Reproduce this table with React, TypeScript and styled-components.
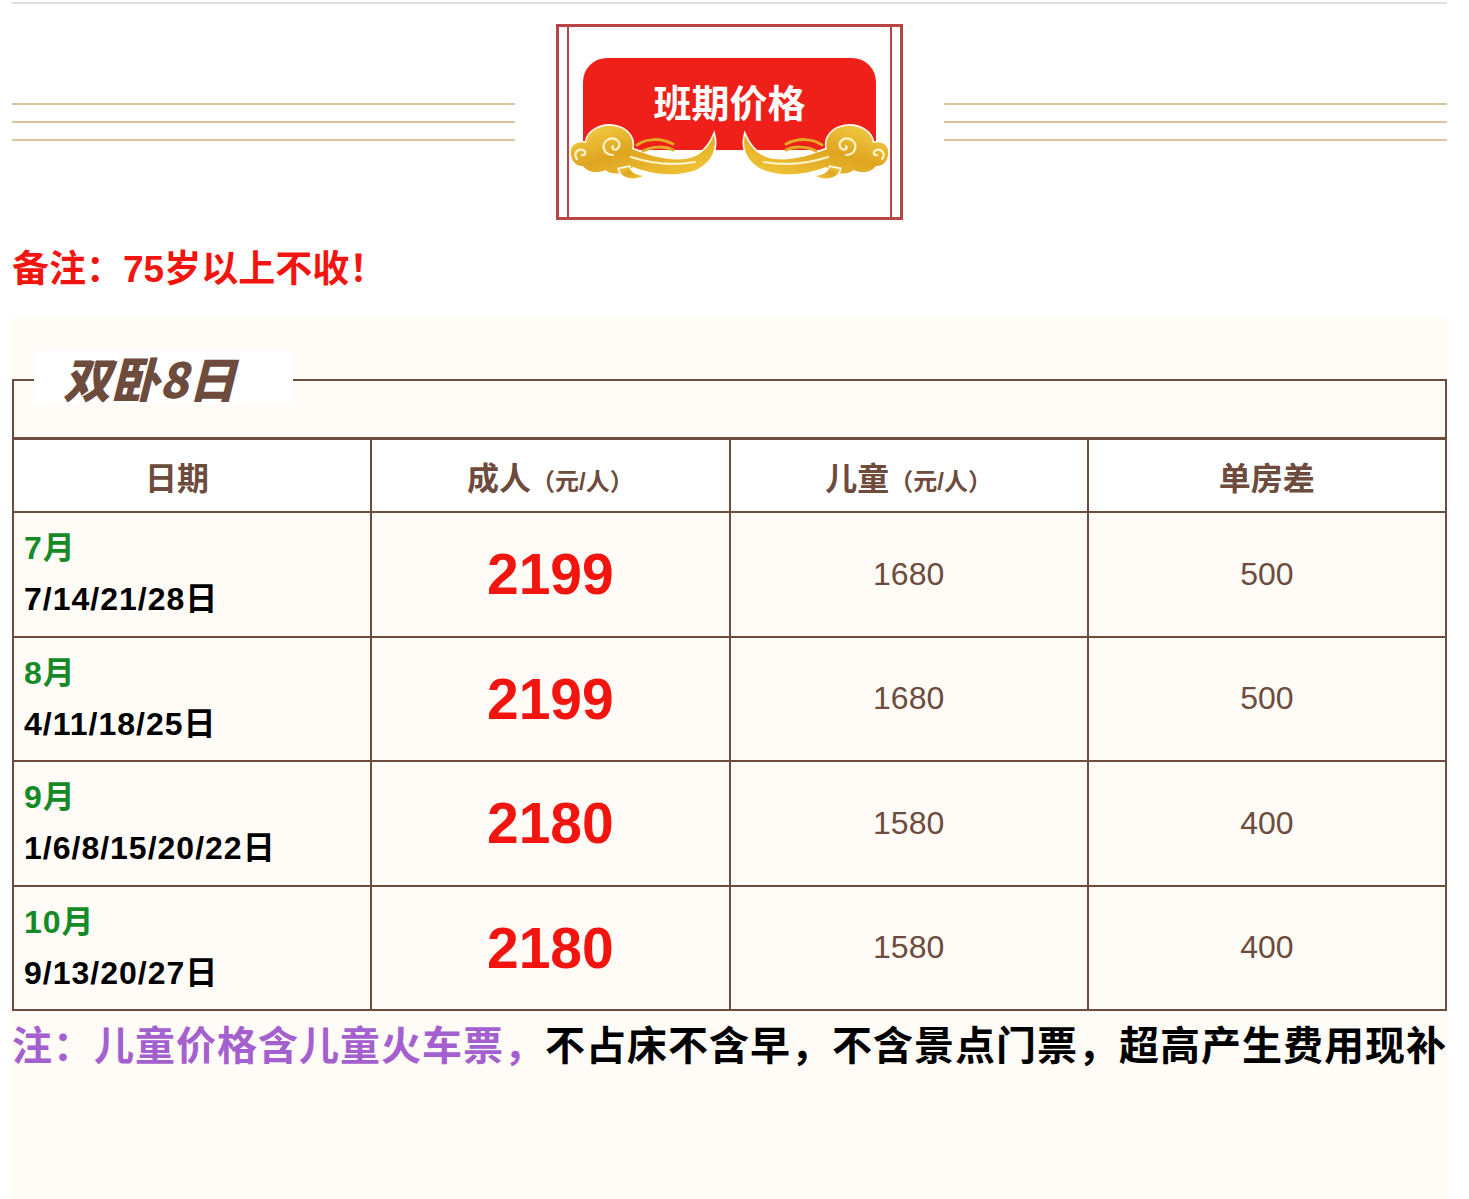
import React from "react";
import styled, { createGlobalStyle } from "styled-components";

const BROWN = "#6d4c3d";
const RED = "#f2150f";
const FONT = `"Liberation Sans", "Noto Sans CJK SC", sans-serif`;

const rows = [
  { month: "7月", days: "7/14/21/28日", adult: "2199", child: "1680", single: "500" },
  { month: "8月", days: "4/11/18/25日", adult: "2199", child: "1680", single: "500" },
  { month: "9月", days: "1/6/8/15/20/22日", adult: "2180", child: "1580", single: "400" },
  { month: "10月", days: "9/13/20/27日", adult: "2180", child: "1580", single: "400" },
];

function Cloud({ flip }: { flip?: boolean }) {
  const id = flip ? "goldR" : "goldL";
  return (
    <CloudSvg $flip={flip} viewBox="0 0 150 62" width="150" height="62">
      <defs>
        <linearGradient id={id} x1="0" y1="0" x2="1" y2="1">
          <stop offset="0" stopColor="#f6d24a" />
          <stop offset="0.45" stopColor="#dfa521" />
          <stop offset="1" stopColor="#f2c838" />
        </linearGradient>
      </defs>
      <g fill={`url(#${id})`} stroke="#fff" strokeWidth="3" paintOrder="stroke">
        <path d="M4,34 C2,25 10,19 19,22 C20,10 34,3 47,5 C60,7 68,17 65,28 C80,34 100,40 118,38 C132,36 141,28 147,14 C151,30 142,46 122,51 C102,56 82,52 66,46 C58,53 46,55 38,49 C30,53 20,51 16,45 C8,45 5,40 4,34 Z" />
        <path d="M52,48 C54,57 66,60 76,55 C70,54 64,52 62,46 Z" />
      </g>
      <g fill="none" stroke="#fff4cc" strokeWidth="2.2" strokeLinecap="round">
        <path d="M46,34 C36,34 33,22 42,18 C50,15 56,24 50,28 C47,30 44,27 46,25" />
        <path d="M10,38 C6,33 10,27 16,29 C20,31 18,35 15,34" />
        <path d="M64,36 C82,42 104,45 128,41" />
      </g>
      <g fill="none" stroke="#e2aa26" strokeWidth="3" strokeLinecap="round">
        <path d="M70,24 C80,17 94,17 106,23" />
        <path d="M76,30 C86,25 98,25 106,29" />
      </g>
    </CloudSvg>
  );
}

export default function App() {
  return (
    <Page>
      <GlobalStyle />
      <TopRule />
      <BannerRow>
        <Stripes>
          <Stripe />
          <Stripe />
          <Stripe />
        </Stripes>
        <Frame>
          <FrameInner>
            <Pill>班期价格</Pill>
            <CloudLeft>
              <Cloud />
            </CloudLeft>
            <CloudRight>
              <Cloud flip />
            </CloudRight>
          </FrameInner>
        </Frame>
        <Stripes>
          <Stripe />
          <Stripe />
          <Stripe />
        </Stripes>
      </BannerRow>
      <Remark>备注：75岁以上不收！</Remark>
      <Panel>
        <TitleBar>
          <Legend>双卧8日</Legend>
        </TitleBar>
        <PriceTable>
          <thead>
            <tr>
              <HeadCell $shift={30}>日期</HeadCell>
              <HeadCell>
                成人<Unit>（元/人）</Unit>
              </HeadCell>
              <HeadCell>
                儿童<Unit>（元/人）</Unit>
              </HeadCell>
              <HeadCell>单房差</HeadCell>
            </tr>
          </thead>
          <tbody>
            {rows.map((r) => (
              <tr key={r.month}>
                <DateCell>
                  <Month>{r.month}</Month>
                  <Days>{r.days}</Days>
                </DateCell>
                <AdultCell>{r.adult}</AdultCell>
                <PlainCell>{r.child}</PlainCell>
                <PlainCell>{r.single}</PlainCell>
              </tr>
            ))}
          </tbody>
        </PriceTable>
        <Note>
          <NoteLead>注：儿童价格含儿童火车票，</NoteLead>
          不占床不含早，不含景点门票，超高产生费用现补
        </Note>
      </Panel>
    </Page>
  );
}

const GlobalStyle = createGlobalStyle`
  body {
    margin: 0;
    background: #fff;
    font-family: ${FONT};
  }
`;

const Page = styled.div`
  width: 1435px;
  margin-left: 12px;
`;

const TopRule = styled.div`
  margin-top: 2px;
  height: 2px;
  background: #e0e0e0;
`;

const BannerRow = styled.div`
  margin-top: 20px;
  height: 196px;
  display: flex;
  align-items: center;
  justify-content: space-between;
`;

const Stripes = styled.div`
  width: 503px;
  display: flex;
  flex-direction: column;
  gap: 16px;
`;

const Stripe = styled.div`
  height: 2px;
  background: #d9c6a1;
`;

const Frame = styled.div`
  width: 347px;
  height: 196px;
  box-sizing: border-box;
  border: 3px solid #bb4444;
  padding: 0 8px;
  background: #fff;
`;

const FrameInner = styled.div`
  position: relative;
  height: 100%;
  box-sizing: border-box;
  border-left: 2px solid #bb4444;
  border-right: 2px solid #bb4444;
  padding: 31px 14px 0;
`;

const Pill = styled.div`
  height: 92px;
  box-sizing: border-box;
  padding-top: 19px;
  background: #ee2019;
  border-radius: 24px 24px 0 0;
  color: #fff;
  font-family: "Noto Sans CJK SC", sans-serif;
  font-weight: 700;
  font-size: 38px;
  line-height: 48px;
  text-align: center;
`;

const CloudLeft = styled.div`
  position: absolute;
  left: -2px;
  top: 94px;
  line-height: 0;
`;

const CloudRight = styled.div`
  position: absolute;
  right: -2px;
  top: 94px;
  line-height: 0;
`;

const CloudSvg = styled.svg<{ $flip?: boolean }>`
  display: block;
  transform: ${(p) => (p.$flip ? "scaleX(-1)" : "none")};
`;

const Remark = styled.div`
  margin-top: 25px;
  font-family: ${FONT};
  font-size: 37px;
  line-height: 50px;
  font-weight: 700;
  color: ${RED};
`;

const Panel = styled.div`
  margin-top: 23px;
  height: 881px;
  box-sizing: border-box;
  padding-top: 61px;
  background: #fffbf6;
`;

const TitleBar = styled.div`
  position: relative;
  height: 56px;
  border: 2px solid ${BROWN};
  border-bottom: none;
`;

const Legend = styled.div`
  position: absolute;
  left: 20px;
  top: -30px;
  width: 259px;
  height: 53px;
  box-sizing: border-box;
  padding-left: 29px;
  background: #fff;
  color: ${BROWN};
  font-family: "Noto Sans CJK SC", sans-serif;
  font-size: 48px;
  line-height: 53px;
  font-weight: 900;
  font-style: italic;
`;

const PriceTable = styled.table`
  width: 1435px;
  border-collapse: collapse;
  table-layout: fixed;
  border-top: 3px solid ${BROWN};
  font-family: ${FONT};
  td, th {
    border: 2px solid ${BROWN};
    font-family: ${FONT};
  }
  tbody tr {
    height: 124.5px;
  }
`;

const HeadCell = styled.th<{ $shift?: number }>`
  height: 71px;
  padding: 0 ${(p) => p.$shift ?? 0}px 0 0;
  background: #fff;
  color: ${BROWN};
  font-size: 32px;
  font-weight: 700;
  text-align: center;
`;

const Unit = styled.span`
  font-size: 24px;
`;

const DateCell = styled.td`
  padding: 0 0 0 10px;
  vertical-align: middle;
`;

const Month = styled.div`
  color: #178a28;
  font-family: ${FONT};
  font-size: 32px;
  letter-spacing: 1px;
  line-height: 51px;
  font-weight: 700;
`;

const Days = styled.div`
  color: #000;
  font-family: ${FONT};
  font-size: 32px;
  letter-spacing: 1px;
  line-height: 51px;
  font-weight: 700;
`;

const AdultCell = styled.td`
  text-align: center;
  color: ${RED};
  font-size: 57px;
  font-weight: 700;
`;

const PlainCell = styled.td`
  text-align: center;
  color: ${BROWN};
  font-size: 32px;
`;

const Note = styled.div`
  margin-top: 8px;
  white-space: nowrap;
  font-family: "Noto Sans CJK SC", sans-serif;
  font-size: 40px;
  letter-spacing: 1px;
  line-height: 48px;
  font-weight: 700;
  color: #000;
`;

const NoteLead = styled.span`
  color: #a560cf;
`;
